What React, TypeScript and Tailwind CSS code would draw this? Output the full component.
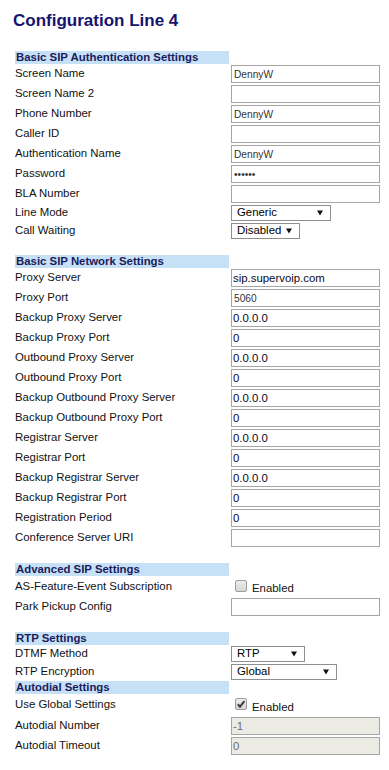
import React from "react";

type Row =
  | { kind: "text"; label: string; value?: string; small?: boolean; disabled?: boolean }
  | { kind: "select"; label: string; value: string; width: string }
  | { kind: "check"; label: string; checked: boolean };

const basicAuth: Row[] = [
  { kind: "text", label: "Screen Name", value: "DennyW", small: true },
  { kind: "text", label: "Screen Name 2" },
  { kind: "text", label: "Phone Number", value: "DennyW", small: true },
  { kind: "text", label: "Caller ID" },
  { kind: "text", label: "Authentication Name", value: "DennyW", small: true },
  { kind: "text", label: "Password", value: "••••••", small: true },
  { kind: "text", label: "BLA Number" },
  { kind: "select", label: "Line Mode", value: "Generic", width: "w-[100px]" },
  { kind: "select", label: "Call Waiting", value: "Disabled", width: "w-[69px]" },
];

const network: Row[] = [
  { kind: "text", label: "Proxy Server", value: "sip.supervoip.com" },
  { kind: "text", label: "Proxy Port", value: "5060", small: true },
  { kind: "text", label: "Backup Proxy Server", value: "0.0.0.0" },
  { kind: "text", label: "Backup Proxy Port", value: "0" },
  { kind: "text", label: "Outbound Proxy Server", value: "0.0.0.0" },
  { kind: "text", label: "Outbound Proxy Port", value: "0" },
  { kind: "text", label: "Backup Outbound Proxy Server", value: "0.0.0.0" },
  { kind: "text", label: "Backup Outbound Proxy Port", value: "0" },
  { kind: "text", label: "Registrar Server", value: "0.0.0.0" },
  { kind: "text", label: "Registrar Port", value: "0" },
  { kind: "text", label: "Backup Registrar Server", value: "0.0.0.0" },
  { kind: "text", label: "Backup Registrar Port", value: "0" },
  { kind: "text", label: "Registration Period", value: "0" },
  { kind: "text", label: "Conference Server URI" },
];

const SectionHeader = ({ title, className = "" }: { title: string; className?: string }) => (
  <div className={`w-[214px] h-[13px] bg-[#c6e0f6] pl-[1px] text-[11.4px] leading-[12px] font-bold text-[#1b1b5c] ${className}`}>
    {title}
  </div>
);

const Arrow = () => (
  <svg width="6" height="6" viewBox="0 0 6 6" className="shrink-0">
    <polygon points="0,0.5 6,0.5 3,5.5" fill="#111" />
  </svg>
);

const Checkbox = ({ checked }: { checked: boolean }) => (
  <div className="ml-[4px] mb-[2px] w-[12px] h-[12px] rounded-[2px] border border-[#9d9d9d] bg-gradient-to-b from-[#ececec] to-[#d6d6d6] flex items-center justify-center">
    {checked && (
      <svg width="10" height="10" viewBox="0 0 10 10">
        <path d="M1.8 5.2 L4 7.6 L8.4 2.2" stroke="#3c3c3c" strokeWidth="2" fill="none" />
      </svg>
    )}
  </div>
);

const FieldRow = ({ row }: { row: Row }) => {
  if (row.kind === "select") {
    return (
      <div className="flex items-center h-[18px]">
        <div className="w-[216px] text-[11.4px] text-[#111]">{row.label}</div>
        <div className={`${row.width} h-[16px] border border-[#8f8f8f] flex items-center justify-between pl-[5px] pr-[7px] text-[11.4px] text-black`}>
          <span>{row.value}</span>
          <Arrow />
        </div>
      </div>
    );
  }
  if (row.kind === "check") {
    return (
      <div className="flex items-center h-full">
        <div className="w-[216px] text-[11.4px] text-[#111]">{row.label}</div>
        <Checkbox checked={row.checked} />
        <span className="ml-[5px] mt-[5px] text-[11.4px] text-[#111]">Enabled</span>
      </div>
    );
  }
  return (
    <div className="flex items-center h-[20px]">
      <div className="w-[216px] text-[11.4px] text-[#111]">{row.label}</div>
      <input
        readOnly
        value={row.value ?? ""}
        className={`w-[149px] h-[18px] border border-[#a5a5a5] outline-none ${
          row.disabled ? "bg-[#ebebe4] text-[#6d6d6d]" : "bg-white"
        } ${row.small ? "pl-[2px] text-[10.2px] text-[#333]" : "pl-[1px] text-[11.4px] text-[#0a0a1e]"} ${
          row.disabled ? "!text-[#6d6d6d]" : ""
        }`}
      />
    </div>
  );
};

export default function App() {
  return (
    <div className="w-[389px] h-[770px] bg-white overflow-hidden pl-[15px] font-['Liberation_Sans',Arial,sans-serif]">
      <h1 className="mt-[11px] -ml-[2px] text-[17px] leading-[20px] font-bold text-[#15156e]">Configuration Line 4</h1>

      <SectionHeader title="Basic SIP Authentication Settings" className="mt-[20px]" />
      {basicAuth.map((r) => (
        <FieldRow key={r.label} row={r} />
      ))}

      <SectionHeader title="Basic SIP Network Settings" className="mt-[15px]" />
      {network.map((r) => (
        <FieldRow key={r.label} row={r} />
      ))}

      <SectionHeader title="Advanced SIP Settings" className="mt-[15px]" />
      <div className="h-[21px]">
        <FieldRow row={{ kind: "check", label: "AS-Feature-Event Subscription", checked: false }} />
      </div>
      <FieldRow row={{ kind: "text", label: "Park Pickup Config" }} />

      <SectionHeader title="RTP Settings" className="mt-[15px]" />
      <FieldRow row={{ kind: "select", label: "DTMF Method", value: "RTP", width: "w-[74px]" }} />
      <FieldRow row={{ kind: "select", label: "RTP Encryption", value: "Global", width: "w-[106px]" }} />

      <SectionHeader title="Autodial Settings" />
      <div className="h-[22px]">
        <FieldRow row={{ kind: "check", label: "Use Global Settings", checked: true }} />
      </div>
      <FieldRow row={{ kind: "text", label: "Autodial Number", value: "-1", disabled: true }} />
      <FieldRow row={{ kind: "text", label: "Autodial Timeout", value: "0", disabled: true }} />
    </div>
  );
}
